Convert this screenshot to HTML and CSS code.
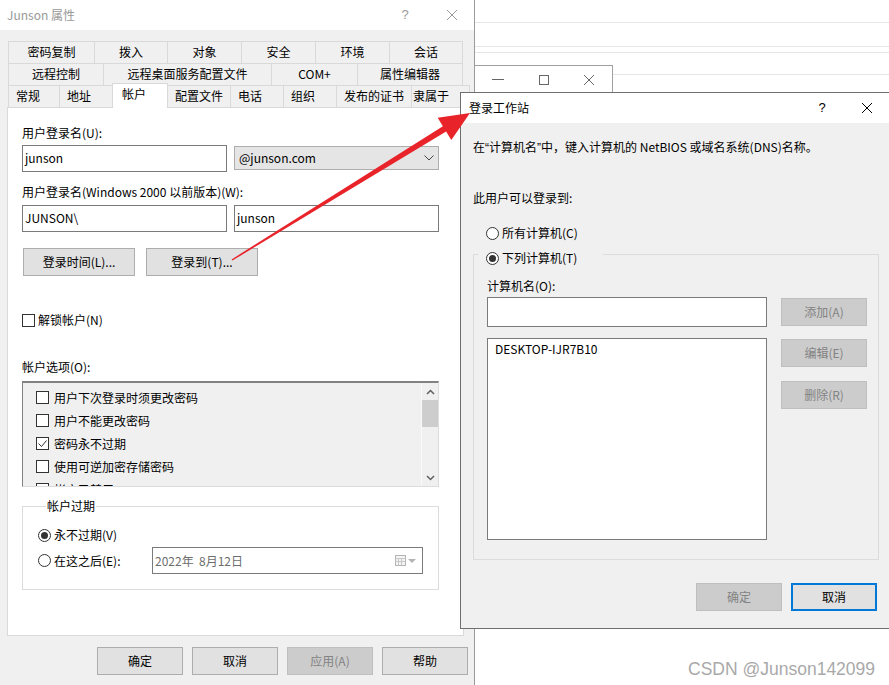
FILE: index.html
```html
<!DOCTYPE html>
<html lang="zh-CN">
<head>
    <meta charset="UTF-8">
    <meta name="viewport" content="width=device-width, initial-scale=1.0">
    <title>Junson 属性</title>
    <link rel="stylesheet" href="styles.css">
</head>
<body>
<div class="desktop">

    <!-- window lying behind both dialogs -->
    <div class="back-window">
        <div class="back-row row-a"></div>
        <div class="back-row row-b"></div>
        <div class="back-row row-c"></div>
        <div class="back-row row-d"></div>
        <div class="mini-window">
            <span class="mini-btn"><svg width="12" height="1"><line x1="0" y1="0.5" x2="12" y2="0.5" stroke="#666"/></svg></span>
            <span class="mini-btn"><svg width="10" height="10"><rect x="0.5" y="0.5" width="9" height="9" fill="none" stroke="#666"/></svg></span>
            <span class="mini-btn"><svg width="10" height="10"><path d="M0 0L10 10M10 0L0 10" stroke="#666"/></svg></span>
        </div>
    </div>

    <!-- Junson 属性 -->
    <div class="win-props">
        <div class="titlebar inactive">
            <span class="title">Junson 属性</span>
            <span class="tb-help">?</span>
            <span class="tb-close"><svg width="10" height="10"><path d="M0 0L10 10M10 0L0 10" stroke="#999"/></svg></span>
        </div>

        <div class="tabs">
            <div class="tab-row row-1">
                <div class="tab">密码复制</div>
                <div class="tab">拨入</div>
                <div class="tab">对象</div>
                <div class="tab">安全</div>
                <div class="tab">环境</div>
                <div class="tab">会话</div>
            </div>
            <div class="tab-row row-2">
                <div class="tab">远程控制</div>
                <div class="tab">远程桌面服务配置文件</div>
                <div class="tab">COM+</div>
                <div class="tab">属性编辑器</div>
            </div>
            <div class="tab-row row-3">
                <div class="tab">常规</div>
                <div class="tab">地址</div>
                <div class="tab active">帐户</div>
                <div class="tab">配置文件</div>
                <div class="tab">电话</div>
                <div class="tab">组织</div>
                <div class="tab">发布的证书</div>
                <div class="tab">隶属于</div>
            </div>
        </div>

        <div class="tab-page">
            <div class="label label-upn">用户登录名(U):</div>
            <div class="field-row">
                <div class="textbox">junson</div>
                <div class="combo">
                    <span>@junson.com</span>
                    <svg width="10" height="6"><polyline points="0.5,0.5 5,5 9.5,0.5" fill="none" stroke="#444"/></svg>
                </div>
            </div>

            <div class="label label-sam">用户登录名(Windows 2000 以前版本)(W):</div>
            <div class="field-row field-sam">
                <div class="textbox">JUNSON\</div>
                <div class="textbox">junson</div>
            </div>

            <div class="logon-buttons">
                <button class="btn btn-logon">登录时间(L)...</button>
                <button class="btn btn-logon">登录到(T)...</button>
            </div>

            <div class="check-row unlock-row">
                <span class="checkbox"></span>
                <span>解锁帐户(N)</span>
            </div>

            <div class="label label-options">帐户选项(O):</div>
            <div class="options-list">
                <div class="options-items">
                    <div class="option"><span class="checkbox"></span>用户下次登录时须更改密码</div>
                    <div class="option"><span class="checkbox"></span>用户不能更改密码</div>
                    <div class="option"><span class="checkbox"><svg width="11" height="11"><polyline points="1.5,5.5 4.5,8.5 9.5,2.5" fill="none" stroke="#333"/></svg></span>密码永不过期</div>
                    <div class="option"><span class="checkbox"></span>使用可逆加密存储密码</div>
                    <div class="option"><span class="checkbox"></span>帐户已禁用</div>
                </div>
                <div class="scrollbar">
                    <div class="sb-arrow"><svg width="9" height="6"><polyline points="1,5 4.5,1.5 8,5" fill="none" stroke="#606060" stroke-width="1.5"/></svg></div>
                    <div class="sb-thumb"></div>
                    <div class="sb-track"></div>
                    <div class="sb-arrow"><svg width="9" height="6"><polyline points="1,1 4.5,4.5 8,1" fill="none" stroke="#606060" stroke-width="1.5"/></svg></div>
                </div>
            </div>

            <div class="group expire-group">
                <div class="group-title">帐户过期</div>
                <div class="radio-row never-row">
                    <span class="radio checked"></span>
                    <span>永不过期(V)</span>
                </div>
                <div class="radio-row after-row">
                    <span class="radio"></span>
                    <span class="after-label">在这之后(E):</span>
                    <div class="datepicker">
                        <span>2022年&nbsp;&nbsp;8月12日</span>
                        <span class="date-icons">
                            <svg width="11" height="11"><rect x="0.5" y="0.5" width="10" height="10" fill="#f4f4f4" stroke="#b4b4b4"/><path d="M0.5 3.5H10.5M0.5 6.5H10.5M3.5 3V10.5M6.5 3V10.5" stroke="#c8c8c8"/></svg>
                            <svg width="8" height="4"><polygon points="0,0 8,0 4,4" fill="#b4b4b4"/></svg>
                        </span>
                    </div>
                </div>
            </div>
        </div>

        <div class="props-buttons">
            <button class="btn btn-dialog">确定</button>
            <button class="btn btn-dialog">取消</button>
            <button class="btn btn-dialog disabled">应用(A)</button>
            <button class="btn btn-dialog">帮助</button>
        </div>
    </div>

    <!-- 登录工作站 -->
    <div class="win-logon">
        <div class="titlebar">
            <span class="title">登录工作站</span>
            <span class="tb-help">?</span>
            <span class="tb-close"><svg width="10" height="10"><path d="M0 0L10 10M10 0L0 10" stroke="#000"/></svg></span>
        </div>
        <div class="logon-body">
            <div class="intro">在<span class="q">“</span>计算机名<span class="q">”</span>中，键入计算机的 NetBIOS 或域名系统(DNS)名称。</div>
            <div class="can-logon">此用户可以登录到:</div>
            <div class="radio-row all-row">
                <span class="radio"></span>
                <span>所有计算机(C)</span>
            </div>
            <div class="group computers-group">
                <div class="group-legend">
                    <span class="radio checked"></span>
                    <span>下列计算机(T)</span>
                </div>
                <div class="label">计算机名(O):</div>
                <div class="computers">
                    <div class="computers-left">
                        <div class="name-input"></div>
                        <div class="computer-list">
                            <div class="computer">DESKTOP-IJR7B10</div>
                        </div>
                    </div>
                    <div class="computers-right">
                        <button class="btn btn-side disabled">添加(A)</button>
                        <button class="btn btn-side disabled">编辑(E)</button>
                        <button class="btn btn-side disabled">删除(R)</button>
                    </div>
                </div>
            </div>
            <div class="logon-buttons-bottom">
                <button class="btn btn-dialog disabled">确定</button>
                <button class="btn btn-dialog focused">取消</button>
            </div>
        </div>
    </div>

    <div class="watermark">CSDN @Junson142099</div>

    <svg class="arrow" width="889" height="685">
        <polygon points="231.6,259.4 442.9,126.2 437.7,117.7 470,113 451.3,139.9 446.1,131.4 232.4,260.6" fill="#e8242a"/>
    </svg>
</div>
</body>
</html>
```

FILE: styles.css
```css
body {
    margin: 0;
    font-family: "Noto Sans CJK SC", "Microsoft YaHei", sans-serif;
    font-size: 12px;
    line-height: 16px;
    color: #000;
}

.desktop {
    position: relative;
    width: 889px;
    height: 685px;
    overflow: hidden;
    background-color: #fff;
}

/* window in the back */
.back-window {
    position: absolute;
    left: 475px;
    top: 0;
    width: 414px;
    height: 92px;
    background-color: #fff;
}

.back-row {
    border-bottom: 1px solid #e6e6e6;
}

.row-a { height: 22px; }
.row-b { height: 23px; }
.row-c { height: 5px; }
.row-d { height: 21px; }

.mini-window {
    position: absolute;
    left: 0;
    top: 65px;
    width: 137px;
    height: 27px;
    display: flex;
    align-items: center;
    background-color: #fff;
    border-top: 1px solid #a0a0a0;
    border-right: 1px solid #a0a0a0;
}

.mini-btn {
    width: 46px;
    display: flex;
    justify-content: center;
}

/* shared window parts */
.titlebar {
    display: flex;
    align-items: center;
    height: 30px;
    background-color: #fff;
}

.titlebar .title {
    flex: 1;
}

.inactive {
    color: #999;
}

.tb-help {
    width: 12px;
    text-align: center;
    font-family: "Liberation Sans", sans-serif;
    font-size: 13px;
}

.tb-close {
    display: flex;
    margin-right: 17px;
}

.btn {
    box-sizing: border-box;
    padding: 0;
    border: 1px solid #adadad;
    background-color: #e1e1e1;
    font: inherit;
    color: #000;
}

.btn.disabled {
    background-color: #cccccc;
    border-color: #bfbfbf;
    color: #838383;
}

.btn.focused {
    border: 2px solid #0078d7;
}

.btn-dialog {
    width: 86px;
    height: 28px;
}

.checkbox {
    display: flex;
    flex-shrink: 0;
    width: 13px;
    height: 13px;
    box-sizing: border-box;
    border: 1px solid #333;
    background-color: #fff;
}

.radio {
    display: flex;
    align-items: center;
    justify-content: center;
    flex-shrink: 0;
    width: 13px;
    height: 13px;
    box-sizing: border-box;
    border: 1px solid #333;
    border-radius: 50%;
    background-color: #fff;
}

.radio.checked::after {
    content: "";
    width: 7px;
    height: 7px;
    border-radius: 50%;
    background-color: #333;
}

.radio-row {
    display: flex;
    align-items: center;
    gap: 3px;
    height: 20px;
}

.group {
    box-sizing: border-box;
    border: 1px solid #dcdcdc;
}

/* Junson 属性 */
.win-props {
    position: absolute;
    left: 0;
    top: 0;
    width: 474px;
    height: 685px;
    background-color: #f0f0f0;
    border-right: 1px solid #9b9b9b;
}

.win-props .titlebar {
    padding-left: 7px;
}

.win-props .tb-help {
    margin-right: 36px;
}

.tabs {
    padding-top: 11px;
}

.tab-row {
    display: flex;
    height: 22px;
    margin-left: 8px;
}

.tab {
    flex-shrink: 0;
    box-sizing: border-box;
    height: 22px;
    line-height: 20px;
    text-align: center;
    border-top: 1px solid #d9d9d9;
    border-right: 1px solid #d9d9d9;
}

.tab:first-child {
    border-left: 1px solid #d9d9d9;
}

.row-1 .tab:nth-child(1) { width: 87px; }
.row-1 .tab:nth-child(2) { width: 73px; }
.row-1 .tab:nth-child(3) { width: 74px; }
.row-1 .tab:nth-child(4) { width: 74px; }
.row-1 .tab:nth-child(5) { width: 74px; }
.row-1 .tab:nth-child(6) { width: 73px; }

.row-2 .tab:nth-child(1) { width: 96px; }
.row-2 .tab:nth-child(2) { width: 168px; }
.row-2 .tab:nth-child(3) { width: 86px; }
.row-2 .tab:nth-child(4) { width: 105px; }

.row-3 .tab {
    text-align: left;
    padding-left: 7px;
}

.row-3 .tab:nth-child(1) { width: 52px; }
.row-3 .tab:nth-child(2) { width: 53px; }
.row-3 .tab:nth-child(3) { width: 56px; }
.row-3 .tab:nth-child(4) { width: 63px; }
.row-3 .tab:nth-child(5) { width: 53px; }
.row-3 .tab:nth-child(6) { width: 53px; }
.row-3 .tab:nth-child(7) { width: 75px; }
.row-3 .tab:nth-child(8) { width: 58px; padding-left: 1px; }

.tab.active {
    position: relative;
    z-index: 1;
    height: 25px;
    margin-top: -2px;
    margin-left: -1px;
    padding-left: 9px;
    background-color: #fff;
    border-left: 1px solid #d9d9d9;
}

.tab-page {
    position: relative;
    box-sizing: border-box;
    width: 457px;
    height: 529px;
    margin-left: 7px;
    padding-left: 14px;
    background-color: #fff;
    border: 1px solid #d9d9d9;
}

.label-upn {
    padding-top: 17px;
}

.field-row {
    display: flex;
    gap: 7px;
    margin-top: 4px;
}

.textbox {
    box-sizing: border-box;
    width: 205px;
    height: 27px;
    padding-left: 2px;
    line-height: 24px;
    background-color: #fff;
    border: 1px solid #7a7a7a;
}

.combo {
    display: flex;
    align-items: center;
    justify-content: space-between;
    box-sizing: border-box;
    width: 205px;
    height: 24px;
    margin-top: 1px;
    padding: 0 4px 0 4px;
    background-color: #e5e5e5;
    border: 1px solid #adadad;
}

.label-sam {
    margin-top: 12px;
}

.field-sam {
    margin-top: 5px;
}

.logon-buttons {
    display: flex;
    gap: 11px;
    margin-top: 16px;
    margin-left: 1px;
}

.btn-logon {
    width: 112px;
    height: 28px;
}

.check-row {
    display: flex;
    align-items: center;
    gap: 3px;
}

.unlock-row {
    margin-top: 36px;
}

.label-options {
    margin-top: 31px;
}

.options-list {
    display: flex;
    box-sizing: border-box;
    width: 417px;
    height: 106px;
    margin-top: 6px;
    overflow: hidden;
    background-color: #f0f0f0;
    border-top: 2px solid #828282;
    border-left: 1px solid #828282;
    border-right: 1px solid #dcdcdc;
    border-bottom: 1px solid #dcdcdc;
}

.options-items {
    flex: 1;
    padding: 3px 0 0 13px;
}

.option {
    display: flex;
    align-items: center;
    gap: 5px;
    height: 23px;
}

.scrollbar {
    display: flex;
    flex-direction: column;
    width: 16px;
    border-left: 1px solid #fafafa;
}

.sb-arrow {
    display: flex;
    align-items: center;
    justify-content: center;
    height: 17px;
}

.sb-thumb {
    height: 27px;
    background-color: #cdcdcd;
}

.sb-track {
    flex: 1;
}

.expire-group {
    width: 417px;
    margin-top: 19px;
    padding: 0 0 15px 15px;
}

.group-title {
    width: max-content;
    margin: -9px 0 0 8px;
    padding: 0 1px;
    background-color: #fff;
}

.never-row {
    margin-top: 11px;
}

.after-row {
    height: 27px;
    margin-top: 2px;
}

.after-label {
    width: 95px;
}

.datepicker {
    display: flex;
    align-items: center;
    justify-content: space-between;
    box-sizing: border-box;
    width: 271px;
    height: 27px;
    padding: 0 6px 0 2px;
    color: #6d6d6d;
    background-color: #fff;
    border: 1px solid #7a7a7a;
}

.date-icons {
    display: flex;
    align-items: center;
    gap: 2px;
}

.props-buttons {
    display: flex;
    justify-content: flex-end;
    gap: 9px;
    margin-top: 11px;
    padding-right: 6px;
}

/* 登录工作站 */
.win-logon {
    position: absolute;
    left: 460px;
    top: 92px;
    box-sizing: border-box;
    width: 429px;
    height: 537px;
    background-color: #f0f0f0;
    border: 1px solid #6e6e6e;
    border-right: none;
}

.win-logon .titlebar {
    padding-left: 8px;
}

.win-logon .tb-help {
    margin-right: 34px;
}

.logon-body {
    padding-left: 12px;
}

.q {
    font-family: "Liberation Sans", sans-serif;
}

.intro {
    padding-top: 16px;
}

.can-logon {
    margin-top: 34px;
}

.all-row {
    margin-top: 17px;
    padding-left: 13px;
}

.computers-group {
    width: 406px;
    margin-top: 11px;
    padding: 0 10px 19px 13px;
}

.group-legend {
    display: flex;
    align-items: center;
    gap: 3px;
    box-sizing: border-box;
    width: 125px;
    height: 16px;
    margin: -5px 0 0 -9px;
    padding-left: 8px;
    background-color: #f0f0f0;
}

.computers-group .label {
    margin-top: 12px;
}

.computers {
    display: flex;
    margin-top: 3px;
}

.name-input {
    box-sizing: border-box;
    width: 280px;
    height: 30px;
    background-color: #fff;
    border: 1px solid #7a7a7a;
}

.computer-list {
    box-sizing: border-box;
    width: 280px;
    height: 202px;
    margin-top: 11px;
    padding: 2px 0 0 7px;
    background-color: #fff;
    border: 1px solid #7a7a7a;
}

.computers-right {
    display: flex;
    flex-direction: column;
    margin-left: 14px;
    padding-top: 1px;
}

.btn-side {
    width: 86px;
    height: 28px;
}

.btn-side + .btn-side {
    margin-top: 13px;
}

.btn-side:last-child {
    margin-top: 14px;
}

.logon-buttons-bottom {
    display: flex;
    justify-content: flex-end;
    gap: 9px;
    margin-top: 23px;
    padding-right: 12px;
}

/* overlays */
.watermark {
    position: absolute;
    left: 688px;
    top: 659px;
    font-family: "Liberation Sans", sans-serif;
    font-size: 17.5px;
    line-height: 20px;
    color: #a9a9a9;
    text-shadow: 0 0 1px #fff;
}

.arrow {
    position: absolute;
    left: 0;
    top: 0;
    pointer-events: none;
}
```
